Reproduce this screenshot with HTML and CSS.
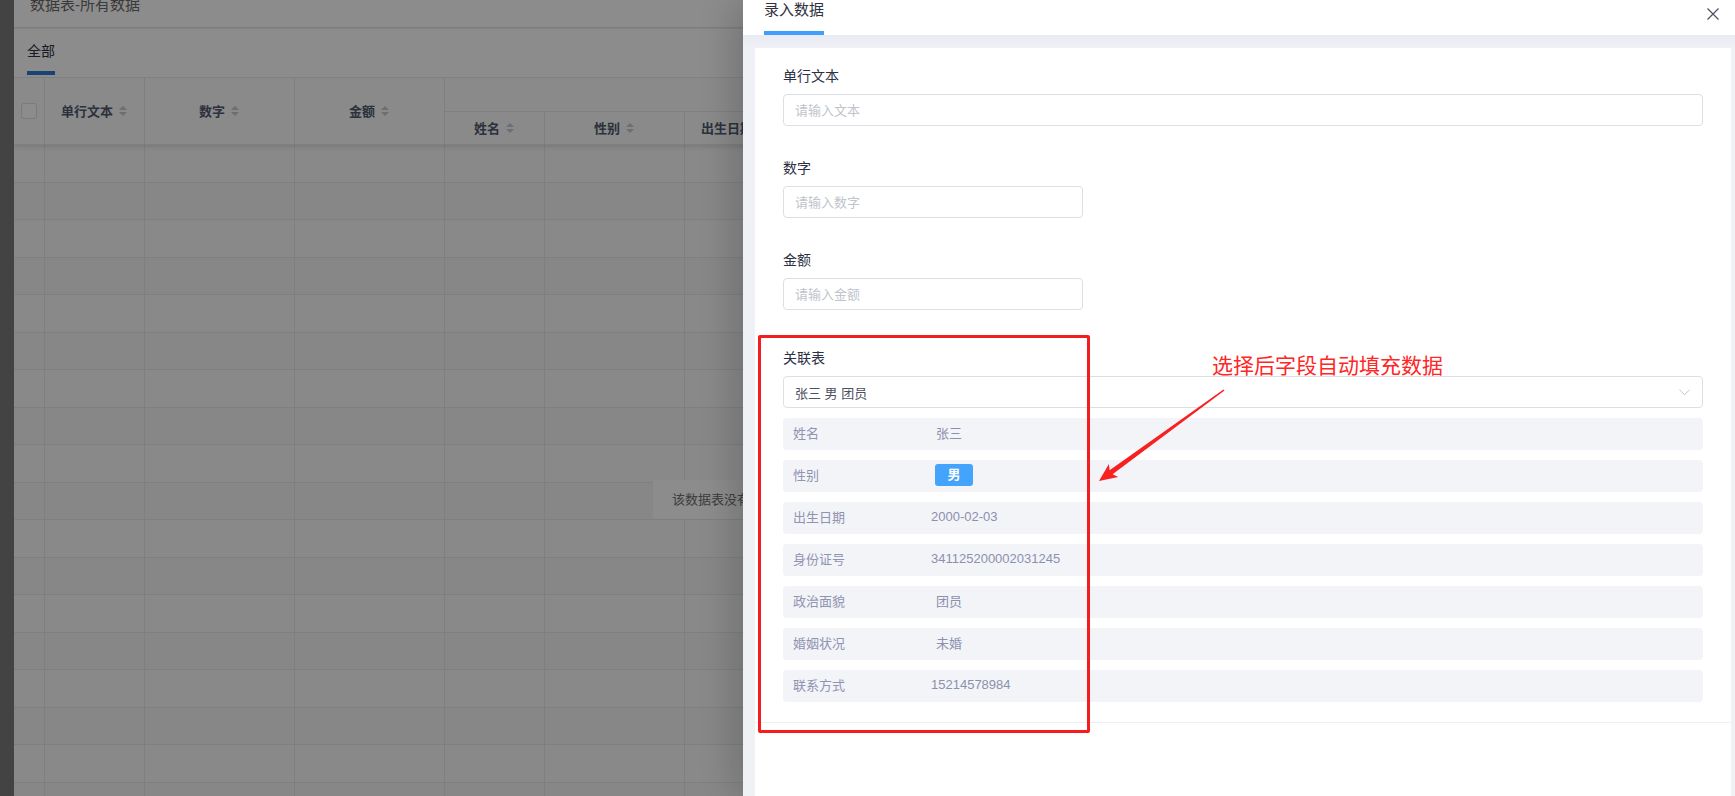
FILE: index.html
```html
<!DOCTYPE html>
<html lang="zh-CN">
<head>
<meta charset="utf-8">
<title>数据表-所有数据</title>
<link rel="stylesheet" href="styles.css">
</head>
<body>
<div class="app">
  <aside class="side-strip"></aside>
  <main class="page">
    <header class="page-head"><h1>数据表-所有数据</h1></header>
    <section class="card">
      <div class="tabs"><span class="tab">全部</span></div>
      <div class="table">
        <div class="thead-wrap">
          <table class="grid">
            <colgroup><col class="c-check"><col class="c-text"><col class="c-num"><col class="c-num"><col class="c-name"><col class="c-sex"><col class="c-date"><col class="c-wide"><col class="c-wide"><col class="c-wide"></colgroup>
            <thead>
              <tr class="h1">
                <th rowspan="2"><span class="checkbox"></span></th>
                <th rowspan="2">单行文本<svg class="sort" viewBox="0 0 8 12"><path d="M0 5 L4 1 L8 5Z M0 7 L4 11 L8 7Z"/></svg></th>
                <th rowspan="2">数字<svg class="sort" viewBox="0 0 8 12"><path d="M0 5 L4 1 L8 5Z M0 7 L4 11 L8 7Z"/></svg></th>
                <th rowspan="2">金额<svg class="sort" viewBox="0 0 8 12"><path d="M0 5 L4 1 L8 5Z M0 7 L4 11 L8 7Z"/></svg></th>
                <th colspan="6">关联表</th>
              </tr>
              <tr class="h2">
                <th>姓名<svg class="sort" viewBox="0 0 8 12"><path d="M0 5 L4 1 L8 5Z M0 7 L4 11 L8 7Z"/></svg></th>
                <th>性别<svg class="sort" viewBox="0 0 8 12"><path d="M0 5 L4 1 L8 5Z M0 7 L4 11 L8 7Z"/></svg></th>
                <th>出生日期<svg class="sort" viewBox="0 0 8 12"><path d="M0 5 L4 1 L8 5Z M0 7 L4 11 L8 7Z"/></svg></th>
                <th>身份证号</th>
                <th>政治面貌</th>
                <th>婚姻状况</th>
              </tr>
            </thead>
          </table>
        </div>
        <div class="tbody-wrap">
          <table class="grid body">
            <colgroup><col class="c-check"><col class="c-text"><col class="c-num"><col class="c-num"><col class="c-name"><col class="c-sex"><col class="c-date"><col class="c-wide"><col class="c-wide"><col class="c-wide"></colgroup>
            <tbody>
              <tr><td></td><td></td><td></td><td></td><td></td><td></td><td></td><td></td><td></td><td></td></tr>
              <tr><td></td><td></td><td></td><td></td><td></td><td></td><td></td><td></td><td></td><td></td></tr>
              <tr><td></td><td></td><td></td><td></td><td></td><td></td><td></td><td></td><td></td><td></td></tr>
              <tr><td></td><td></td><td></td><td></td><td></td><td></td><td></td><td></td><td></td><td></td></tr>
              <tr><td></td><td></td><td></td><td></td><td></td><td></td><td></td><td></td><td></td><td></td></tr>
              <tr><td></td><td></td><td></td><td></td><td></td><td></td><td></td><td></td><td></td><td></td></tr>
              <tr><td></td><td></td><td></td><td></td><td></td><td></td><td></td><td></td><td></td><td></td></tr>
              <tr><td></td><td></td><td></td><td></td><td></td><td></td><td></td><td></td><td></td><td></td></tr>
              <tr><td></td><td></td><td></td><td></td><td></td><td></td><td></td><td></td><td></td><td></td></tr>
              <tr><td></td><td></td><td></td><td></td><td></td><td></td><td></td><td></td><td></td><td></td></tr>
              <tr><td></td><td></td><td></td><td></td><td></td><td></td><td></td><td></td><td></td><td></td></tr>
              <tr><td></td><td></td><td></td><td></td><td></td><td></td><td></td><td></td><td></td><td></td></tr>
              <tr><td></td><td></td><td></td><td></td><td></td><td></td><td></td><td></td><td></td><td></td></tr>
              <tr><td></td><td></td><td></td><td></td><td></td><td></td><td></td><td></td><td></td><td></td></tr>
              <tr><td></td><td></td><td></td><td></td><td></td><td></td><td></td><td></td><td></td><td></td></tr>
              <tr><td></td><td></td><td></td><td></td><td></td><td></td><td></td><td></td><td></td><td></td></tr>
              <tr><td></td><td></td><td></td><td></td><td></td><td></td><td></td><td></td><td></td><td></td></tr>
              <tr><td></td><td></td><td></td><td></td><td></td><td></td><td></td><td></td><td></td><td></td></tr>
            </tbody>
          </table>
          <div class="empty">该数据表没有数据</div>
        </div>
      </div>
    </section>
  </main>
</div>

<div class="mask"></div>

<aside class="drawer">
  <div class="drawer-head">
    <span class="drawer-tab">录入数据</span>
    <button class="close" type="button" aria-label="关闭">
      <svg viewBox="0 0 12 12"><path d="M0.5 0.5 L11.5 11.5 M11.5 0.5 L0.5 11.5"/></svg>
    </button>
  </div>
  <div class="drawer-body">
    <form class="form-card">
      <div class="form-inner">
        <div class="field">
          <label class="field-label">单行文本</label>
          <input class="input" type="text" placeholder="请输入文本">
        </div>
        <div class="field">
          <label class="field-label">数字</label>
          <input class="input short" type="text" placeholder="请输入数字">
        </div>
        <div class="field">
          <label class="field-label">金额</label>
          <input class="input short" type="text" placeholder="请输入金额">
        </div>
        <div class="field relation">
          <label class="field-label">关联表</label>
          <div class="select">
            <span class="select-value">张三 男 团员</span>
            <svg class="chevron" viewBox="0 0 12 7"><path d="M0.5 0.5 L6 6 L11.5 0.5"/></svg>
          </div>
          <div class="info-list">
            <div class="info-row"><span class="info-label">姓名</span><span class="info-val txt">张三</span></div>
            <div class="info-row"><span class="info-label">性别</span><span class="info-val tagged"><span class="tag">男</span></span></div>
            <div class="info-row"><span class="info-label">出生日期</span><span class="info-val">2000-02-03</span></div>
            <div class="info-row"><span class="info-label">身份证号</span><span class="info-val">341125200002031245</span></div>
            <div class="info-row"><span class="info-label">政治面貌</span><span class="info-val txt">团员</span></div>
            <div class="info-row"><span class="info-label">婚姻状况</span><span class="info-val txt">未婚</span></div>
            <div class="info-row"><span class="info-label">联系方式</span><span class="info-val">15214578984</span></div>
          </div>
        </div>
      </div>
      <div class="form-foot"></div>
    </form>
  </div>
</aside>

<div class="callout-box"></div>
<p class="callout-text">选择后字段自动填充数据</p>
<svg class="callout-arrow" viewBox="0 0 1735 796" width="1735" height="796">
  <polygon points="1099,481 1108.9,463.9 1109.6,470.2 1223.5,389.4 1224.5,390.6 1112.6,474.2 1118.3,476.9"/>
</svg>
</body>
</html>
```

FILE: styles.css
```css
* { box-sizing: border-box; }

html, body {
  margin: 0;
  width: 1735px;
  height: 796px;
  overflow: hidden;
  font-family: "Liberation Sans", "Noto Sans CJK SC", sans-serif;
}

/* ---------- background page ---------- */
.app {
  display: flex;
  height: 796px;
}

.side-strip {
  flex: none;
  width: 14px;
  background: #7a7a7a;
}

.page {
  flex: 1;
  min-width: 0;
  display: flex;
  flex-direction: column;
  background: #eceef2;
  overflow: hidden;
}

.page-head {
  flex: none;
  height: 28px;
  background: #fff;
  border-bottom: 1px solid #e4e6ea;
  padding-left: 16px;
  overflow: hidden;
}

.page-head h1 {
  margin: -6px 0 0;
  font-size: 15px;
  font-weight: normal;
  line-height: 22px;
  color: #6a6a6a;
}

.card {
  flex: 1;
  margin-top: 1px;
  background: #fff;
  display: flex;
  flex-direction: column;
  overflow: hidden;
}

.tabs {
  flex: none;
  height: 49px;
  padding-left: 13px;
  border-bottom: 1px solid #e8eaec;
  display: flex;
  align-items: flex-start;
}

.tab {
  height: 46px;
  padding-top: 12px;
  line-height: 20px;
  font-size: 14px;
  color: #2b3244;
  border-bottom: 4px solid #2d7ad0;
}

.table {
  flex: 1;
  display: flex;
  flex-direction: column;
  overflow: hidden;
}

.thead-wrap {
  flex: none;
  position: relative;
  z-index: 1;
  box-shadow: 0 2px 5px rgba(0, 0, 0, 0.12);
}

.grid {
  border-collapse: collapse;
  table-layout: fixed;
  width: 1250px;
}

.c-check { width: 30px; }
.c-text { width: 100px; }
.c-num { width: 150px; }
.c-name { width: 100px; }
.c-sex { width: 140px; }
.c-date { width: 100px; }
.c-wide { width: 160px; }

.grid th {
  height: 33px;
  padding: 0;
  font-size: 13px;
  font-weight: bold;
  color: #515a6e;
  background: #fbfbfc;
  border-right: 1px solid #e6e8eb;
  border-bottom: 1px solid #e6e8eb;
  text-align: center;
  white-space: nowrap;
  overflow: hidden;
}

.grid .h1 th[colspan] { color: transparent; }

.checkbox {
  display: inline-block;
  width: 16px;
  height: 16px;
  border: 1px solid #dcdee2;
  border-radius: 3px;
  background: #fff;
  vertical-align: middle;
}

.sort {
  width: 8px;
  height: 12px;
  margin-left: 6px;
  vertical-align: -1px;
  fill: #c5c8ce;
}

.tbody-wrap {
  flex: 1;
  position: relative;
  overflow: hidden;
}

.grid.body td {
  height: 37.5px;
  padding: 0;
  border-right: 1px solid #e6e8eb;
  border-bottom: 1px solid #e6e8eb;
  background: #fafafa;
}

.grid.body tr:nth-child(even) td { background: #f6f6f7; }

.empty {
  position: absolute;
  left: 639px;
  top: 335px;
  width: 420px;
  height: 39px;
  padding-left: 19px;
  line-height: 39px;
  font-size: 13px;
  color: #707070;
  background: #ffffff;
}

.mask {
  position: fixed;
  inset: 0;
  background: rgba(0, 0, 0, 0.45);
  z-index: 5;
}

/* ---------- drawer ---------- */
.drawer {
  position: fixed;
  top: 0;
  right: 0;
  width: 992px;
  height: 796px;
  z-index: 10;
  background: #fff;
  display: flex;
  flex-direction: column;
  box-shadow: -6px 0 40px rgba(0, 0, 0, 0.22);
}

.drawer-head {
  flex: none;
  height: 35px;
  padding: 0 16px 0 21px;
  display: flex;
  justify-content: space-between;
  align-items: flex-start;
  background: #fff;
}

.drawer-tab {
  height: 35px;
  line-height: 19px;
  font-size: 15px;
  color: #2f3340;
  border-bottom: 4px solid #409eff;
}

.close {
  margin-top: 8px;
  padding: 0;
  border: 0;
  background: none;
  width: 12px;
  height: 12px;
  cursor: pointer;
}

.close svg {
  display: block;
  width: 12px;
  height: 12px;
  stroke: #4c5060;
  stroke-width: 1.2;
  fill: none;
}

.drawer-body {
  flex: 1;
  display: flex;
  padding: 13px 4px 0 12px;
  background: linear-gradient(#e8ebf2, #eff1f6 13px, #f0f1f5);
}

.form-card {
  flex: 1;
  margin: 0;
  background: #fff;
  display: flex;
  flex-direction: column;
}

.form-inner {
  padding: 18px 28px 20px;
}

.field { margin-bottom: 32px; }
.field.relation { margin-top: 38px; margin-bottom: 0; }
.field:nth-child(3) { margin-bottom: 0; }

.field-label {
  display: block;
  margin-bottom: 8px;
  line-height: 20px;
  font-size: 14px;
  color: #2c3044;
}

.input {
  display: block;
  width: 100%;
  height: 32px;
  padding: 0 11px;
  border: 1px solid #dcdfe6;
  border-radius: 4px;
  font: inherit;
  font-size: 13px;
  color: #606266;
  outline: none;
  background: #fff;
}

.input.short { width: 300px; }

.input::placeholder { color: #c0c4cc; }

.select {
  height: 32px;
  padding: 0 11px;
  border: 1px solid #dcdfe6;
  border-radius: 4px;
  display: flex;
  align-items: center;
  justify-content: space-between;
}

.select-value {
  font-size: 13px;
  color: #4d5060;
}

.chevron {
  width: 11px;
  height: 7px;
  margin-right: 1px;
  fill: none;
  stroke: #b8bcc6;
  stroke-width: 1;
}

.info-list {
  margin-top: 10px;
  display: flex;
  flex-direction: column;
  gap: 10px;
}

.info-row {
  height: 32px;
  padding: 0 0 4px 10px;
  display: flex;
  align-items: center;
  background: #f3f4f8;
  border-radius: 4px;
  font-size: 13px;
}

.info-label {
  flex: none;
  width: 138px;
  color: #9093b1;
}

.info-val { color: #8c90ae; }
.info-val.txt { padding-left: 5px; }
.info-val.tagged { padding-left: 4px; padding-top: 2px; display: flex; }

.tag {
  width: 38px;
  height: 22px;
  line-height: 22px;
  text-align: center;
  color: #fff;
  font-weight: bold;
  background: #44a4fb;
  border-radius: 3px;
}

.form-foot {
  flex: 1;
  border-top: 1px solid #eceef3;
}

/* ---------- annotation ---------- */
.callout-box {
  position: fixed;
  left: 758px;
  top: 335px;
  width: 332px;
  height: 398px;
  border: 3px solid #f41c1c;
  border-radius: 2px;
  z-index: 20;
}

.callout-text {
  position: fixed;
  left: 1212px;
  top: 354px;
  margin: 0;
  font-size: 21px;
  line-height: 24px;
  color: #ff2626;
  z-index: 20;
}

.callout-arrow {
  position: fixed;
  left: 0;
  top: 0;
  z-index: 20;
  fill: #f82020;
  pointer-events: none;
}
```
